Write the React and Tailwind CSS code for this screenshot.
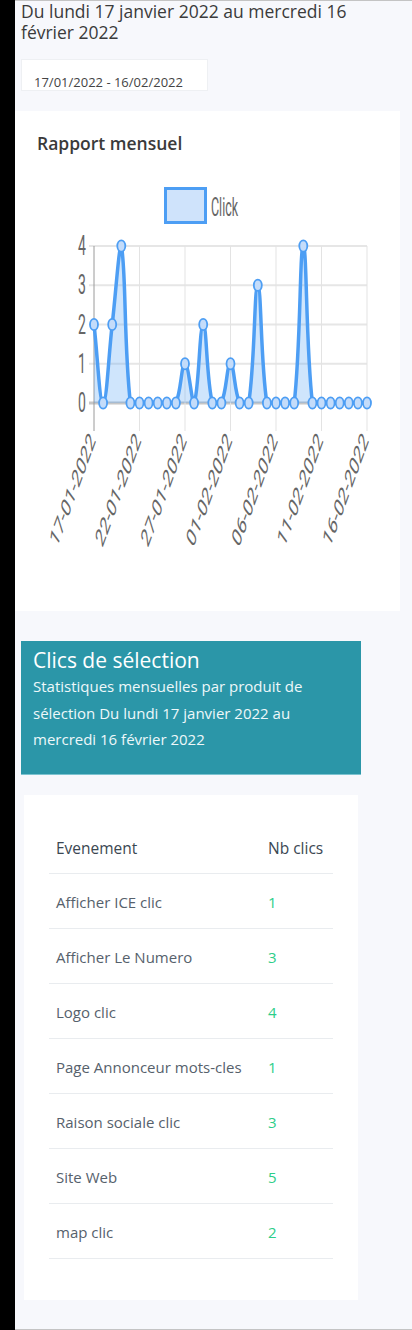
const clicks = [2, 0, 2, 4, 0, 0, 0, 0, 0, 0, 1, 0, 2, 0, 0, 1, 0, 0, 3, 0, 0, 0, 0, 4, 0, 0, 0, 0, 0, 0, 0];

const rows = [
  { label: "Afficher ICE clic", value: 1 },
  { label: "Afficher Le Numero", value: 3 },
  { label: "Logo clic", value: 4 },
  { label: "Page Annonceur mots-cles", value: 1 },
  { label: "Raison sociale clic", value: 3 },
  { label: "Site Web", value: 5 },
  { label: "map clic", value: 2 },
];

const xLabels = ["17-01-2022", "22-01-2022", "27-01-2022", "01-02-2022", "06-02-2022", "11-02-2022", "16-02-2022"];

// chart geometry (svg coords)
const X0 = 79;
const STEP = 9.1;
const TOP = 86;
const BOTTOM = 243;
const UNIT = (BOTTOM - TOP) / 4;
const SQUEEZE = 0.6;

function buildPath(points) {
  const clamp = (v) => Math.max(TOP, Math.min(BOTTOM, v));
  const cps = points.map((cur, i) => {
    const prev = points[i - 1] || cur;
    const next = points[i + 1] || cur;
    const d01 = Math.hypot((cur.x - prev.x) / SQUEEZE, cur.y - prev.y);
    const d12 = Math.hypot((next.x - cur.x) / SQUEEZE, next.y - cur.y);
    const sum = d01 + d12 || 1;
    const fa = 0.4 * (d01 / sum);
    const fb = 0.4 * (d12 / sum);
    return {
      prev: { x: cur.x - fa * (next.x - prev.x), y: clamp(cur.y - fa * (next.y - prev.y)) },
      next: { x: cur.x + fb * (next.x - prev.x), y: clamp(cur.y + fb * (next.y - prev.y)) },
    };
  });
  let d = `M${points[0].x},${points[0].y}`;
  for (let i = 1; i < points.length; i++) {
    const a = cps[i - 1].next;
    const b = cps[i].prev;
    d += ` C${a.x},${a.y} ${b.x},${b.y} ${points[i].x},${points[i].y}`;
  }
  return d;
}

function MonthlyChart() {
  const points = clicks.map((v, i) => ({ x: X0 + i * STEP, y: BOTTOM - v * UNIT }));
  const line = buildPath(points);
  const last = points[points.length - 1];
  const area = `${line} L${last.x},${BOTTOM} L${points[0].x},${BOTTOM} Z`;
  const ticks = [0, 1, 2, 3, 4];
  const vertical = [0, 1, 2, 3, 4, 5, 6].map((k) => X0 + k * 5 * STEP);

  return (
    <svg width="385" height="451" viewBox="0 0 385 451" className="block">
      {/* legend */}
      <rect x="150.5" y="28.5" width="40" height="34" fill="#cfe3fb" stroke="#4d9ef4" strokeWidth="3" />
      <text
        transform="translate(196,56) scale(0.48,1)"
        fontFamily="Roboto, sans-serif"
        fontSize="26"
        fill="#666"
      >
        Click
      </text>

      {/* horizontal grid */}
      {ticks.map((t) => (
        <line
          key={t}
          x1="74"
          x2={X0 + 30 * STEP}
          y1={BOTTOM - t * UNIT}
          y2={BOTTOM - t * UNIT}
          stroke={t === 0 ? "#c6c6c6" : "#e6e6e6"}
          strokeWidth={t === 0 ? 3 : 2}
        />
      ))}

      {/* vertical grid + ticks */}
      {vertical.map((x, k) => (
        <line
          key={k}
          x1={x}
          x2={x}
          y1={TOP}
          y2={271}
          stroke={k === 0 ? "#9a9a9a" : "#e3e3e3"}
          strokeWidth="1"
        />
      ))}

      {/* y labels */}
      {ticks.map((t) => (
        <text
          key={t}
          transform={`translate(71,${BOTTOM - t * UNIT + 9}) scale(0.52,1)`}
          textAnchor="end"
          fontFamily="Roboto, sans-serif"
          fontSize="27"
          fill="#666"
        >
          {t}
        </text>
      ))}

      {/* x labels */}
      {xLabels.map((label, k) => (
        <text
          key={label}
          transform={`translate(${vertical[k] + 2},281) scale(0.52,1) rotate(-55)`}
          textAnchor="end"
          fontFamily="Roboto, sans-serif"
          fontSize="26"
          fill="#666"
        >
          {label}
        </text>
      ))}

      {/* data */}
      <path d={area} fill="rgba(77,158,244,0.27)" />
      <path d={line} fill="none" stroke="#4d9ef4" strokeWidth="3.5" strokeLinejoin="round" />
      {points.map((p, i) => (
        <ellipse
          key={i}
          cx={p.x}
          cy={p.y}
          rx="4"
          ry="5.6"
          fill="#c4dcfa"
          stroke="#4d9ef4"
          strokeWidth="1.8"
        />
      ))}
    </svg>
  );
}

export default function App() {
  return (
    <div className="flex min-h-[1330px] bg-black font-['Open_Sans',sans-serif]">
      <div className="w-[15px] shrink-0 bg-black" />
      <main className="flex-1 border-t border-b border-[#c4c4c4] bg-[#f7f8fc] pb-[29px]">
        <h1 className="w-[360px] pl-[6px] text-[17.5px] leading-[21px] text-[#3b3b3b]">
          Du lundi 17 janvier 2022 au mercredi 16 février 2022
        </h1>

        <div className="ml-[6px] mt-[16px] h-[32px] w-[187px] border border-[#eef0f3] bg-white pl-[12px] pt-[14px] text-[13px] leading-4 text-[#444]">
          17/01/2022 - 16/02/2022
        </div>

        <section className="mt-[20px] w-[385px] bg-white">
          <h2 className="pl-[22px] pt-[20px] text-[17.5px] font-semibold leading-[24px] text-[#3a3a3a]">
            Rapport mensuel
          </h2>
          <div className="mt-[5px]">
            <MonthlyChart />
          </div>
        </section>

        <section className="ml-[6px] mt-[30px] w-[340px] border-b border-[#7cc3d0] bg-[#2b96a8] px-[12px] pb-[21px] pt-[6px] text-white">
          <h3 className="text-[21px] leading-[26px]">Clics de sélection</h3>
          <p className="text-[15px] leading-[26.67px] text-[#eef8fa]">
            Statistiques mensuelles par produit de sélection Du lundi 17 janvier 2022 au mercredi 16 février 2022
          </p>
        </section>

        <section className="ml-[9px] mt-[20px] w-[334px] bg-white px-[25px] pb-[41px] pt-[25px]">
          <div className="grid grid-cols-[212px_72px] border-b border-[#e9ecef] pb-[15px] pt-[18px] text-[15.5px] leading-5 text-[#3b4752]">
            <div className="px-[7px]">Evenement</div>
            <div className="px-[7px] whitespace-nowrap">Nb clics</div>
          </div>
          {rows.map((row) => (
            <div
              key={row.label}
              className="grid grid-cols-[212px_72px] border-b border-[#e9ecef] pb-[16px] pt-[18px] text-[15px] leading-5"
            >
              <div className="px-[7px] whitespace-nowrap text-[#56616c]">{row.label}</div>
              <div className="px-[7px] font-medium text-[#2dce89]">{row.value}</div>
            </div>
          ))}
        </section>
      </main>
    </div>
  );
}
